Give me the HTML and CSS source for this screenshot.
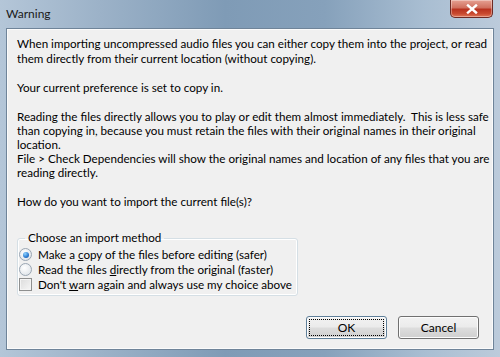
FILE: index.html
```html
<!DOCTYPE html>
<html lang="en">
<head>
  <meta charset="UTF-8" />
  <title>Warning</title>
  <link rel="stylesheet" href="styles.css">
</head>
<body>

  <div class="window">
    <div class="titlebar">
      <span class="title">Warning</span>
      <button class="close" aria-label="Close">
        <svg width="12" height="10" viewBox="0 0 12 10">
          <path d="M2 1.5 L10 8.5 M10 1.5 L2 8.5" stroke="#fff" stroke-width="2.4" stroke-linecap="square" />
        </svg>
      </button>
    </div>

    <div class="client">
      <div class="message">
        <p>When importing uncompressed audio files you can either copy them into the project, or read<br>them directly from their current location (without copying).</p>
        <p>Your current preference is set to copy in.</p>
        <p>Reading the files directly allows you to play or edit them almost immediately.&nbsp; This is less safe<br>than copying in, because you must retain the files with their original names in their original<br>location.<br>File &gt; Check Dependencies will show the original names and location of any files that you are<br>reading directly.</p>
        <p>How do you want to import the current file(s)?</p>
      </div>

      <fieldset class="group">
        <legend>Choose an import method</legend>
        <label class="option">
          <span class="radio checked"></span>
          <span>Make a <u>c</u>opy of the files before editing (safer)</span>
        </label>
        <label class="option">
          <span class="radio"></span>
          <span>Read the files <u>d</u>irectly from the original (faster)</span>
        </label>
        <label class="option">
          <span class="check"></span>
          <span>Don't <u>w</u>arn again and always use my choice above</span>
        </label>
      </fieldset>

      <div class="actions">
        <button class="btn default">OK</button>
        <button class="btn">Cancel</button>
      </div>
    </div>
  </div>

</body>
</html>
```

FILE: styles.css
```css
body {
  margin: 0;
  width: 500px;
  height: 357px;
  overflow: hidden;
  font-family: Lato, 'Open Sans', sans-serif;
  font-size: 11.65px;
  color: #000;
  background: linear-gradient(90deg, #b4c6d8 0%, #9cb2c8 20%, #7f9bb6 45%, #86a1bb 65%, #a9bed2 85%, #bccbdb 100%);
}

.window {
  display: flex;
  flex-direction: column;
  height: 357px;
}

.titlebar {
  height: 28px;
  display: flex;
  align-items: flex-start;
  justify-content: space-between;
  padding: 0 7px 0 6px;
  box-sizing: border-box;
}

.title {
  margin-top: 6px;
  font-size: 12px;
  color: #1a1a1a;
}

.close {
  width: 43px;
  height: 18px;
  border: 1px solid #6d2a24;
  border-top: none;
  border-radius: 0 0 5px 5px;
  background: linear-gradient(180deg, #e6a193 0%, #d0705f 45%, #b9321f 55%, #c8492f 80%, #e07658 100%);
  box-shadow: inset 0 0 0 1px rgba(255, 255, 255, 0.35);
  display: flex;
  align-items: center;
  justify-content: center;
  padding: 0;
}

.client {
  flex: 1;
  margin: 0 6px 7px 6px;
  background: #f0f0f0;
  border: 1px solid #6f8499;
  box-shadow: inset 0 0 0 1px #fbfbfb;
  padding: 8px 10px 10px 10px;
  display: flex;
  flex-direction: column;
}

.message p {
  margin: 0 0 14.5px 0;
  line-height: 14.5px;
  white-space: nowrap;
}

.message p:nth-child(3) {
  line-height: 14.2px;
}

.group {
  margin: 7px 0 0 0;
  width: 281px;
  box-sizing: border-box;
  border: 1px solid #d5dfe5;
  border-radius: 3px;
  box-shadow: inset 0 0 0 1px #fff;
  padding: 2px 0 3px 1px;
}

.group legend {
  padding: 0 3px;
  margin-left: 6px;
  line-height: 14px;
}

.option {
  display: flex;
  align-items: center;
  gap: 6px;
  height: 15px;
  line-height: 15px;
  white-space: nowrap;
}

.option u {
  text-decoration-thickness: 1px;
}

.radio {
  width: 11px;
  height: 11px;
  flex: none;
  border-radius: 50%;
  border: 1px solid #9aa6b3;
  background: radial-gradient(circle at 40% 35%, #ffffff 0%, #e4e8ec 70%, #cfd6dc 100%);
  position: relative;
}

.radio.checked::after {
  content: '';
  position: absolute;
  left: 2.5px;
  top: 2.5px;
  width: 6px;
  height: 6px;
  border-radius: 50%;
  background: radial-gradient(circle at 35% 30%, #8fd3ff 0%, #2a7ad0 60%, #1b4f9a 100%);
}

.check {
  width: 11px;
  height: 11px;
  flex: none;
  border: 1px solid #8e8f8f;
  background: linear-gradient(135deg, #dcdcdc 0%, #f6f6f6 100%);
  box-shadow: inset 0 0 0 1px #f4f4f4;
}

.actions {
  margin-top: auto;
  display: flex;
  justify-content: flex-end;
  gap: 11px;
  padding-right: 4px;
}

.btn {
  width: 81px;
  height: 23px;
  font-family: inherit;
  font-size: 12px;
  color: #000;
  border: 1px solid #707070;
  border-radius: 3px;
  background: linear-gradient(180deg, #f2f2f2 0%, #ebebeb 48%, #dddddd 52%, #cfcfcf 100%);
  box-shadow: inset 0 0 0 1px #fcfcfc;
  padding: 0;
}

.btn.default {
  border-color: #5f7f99;
  outline: 1px dotted #000;
  outline-offset: -4px;
}
```
